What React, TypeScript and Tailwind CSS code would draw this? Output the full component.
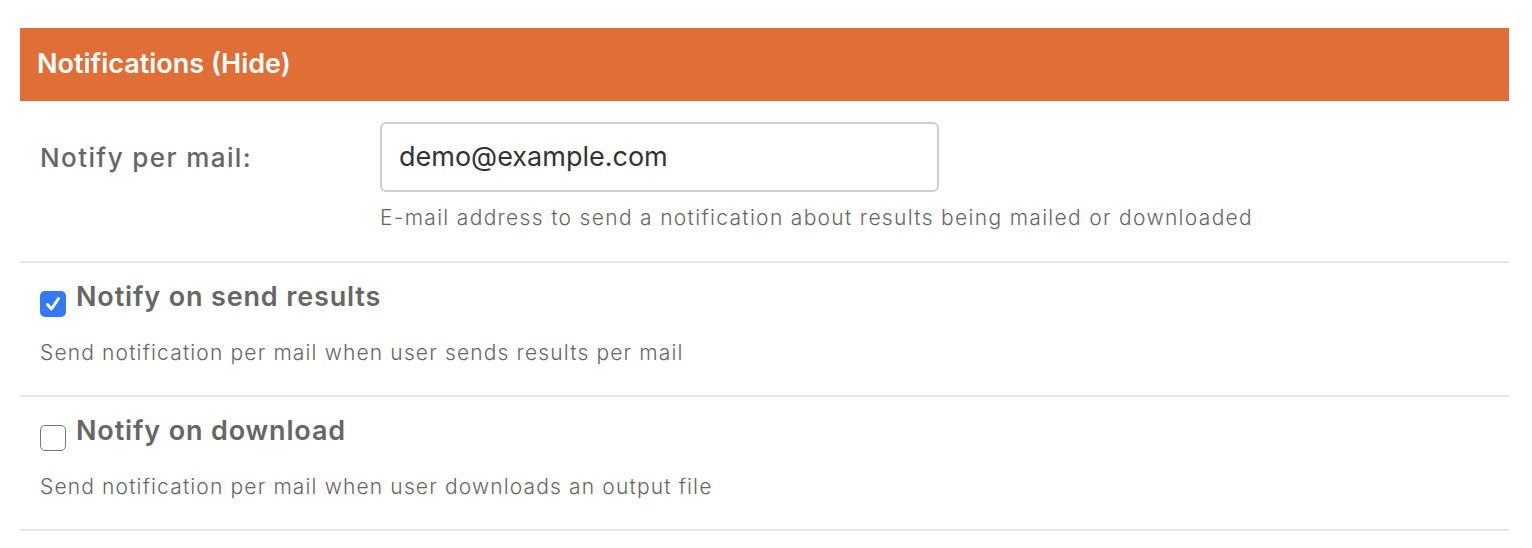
import React from "react";

function Check({ checked }: { checked: boolean }) {
  return checked ? (
    <span className="mt-[9px] flex h-[26px] w-[26px] shrink-0 items-center justify-center rounded-[5px] bg-[#3478f6]">
      <svg width="18" height="18" viewBox="0 0 18 18" fill="none">
        <path d="M3.5 9.5 L7.5 14 L14.5 3.5" stroke="white" strokeWidth="3" strokeLinecap="round" strokeLinejoin="round" />
      </svg>
    </span>
  ) : (
    <span className="mt-[9px] h-[26px] w-[26px] shrink-0 rounded-[5px] border-[1.5px] border-[#767676] bg-white" />
  );
}

function CheckRow({ checked, title, desc }: { checked: boolean; title: string; desc: string }) {
  return (
    <div className="border-b-2 border-[#e6e6e6] px-5 pb-[30px] pt-[19px]">
      <div className="flex items-start gap-[10px]">
        <Check checked={checked} />
        <span className="text-[27px] font-semibold leading-[30px] tracking-[0.85px] text-[#666]">{title}</span>
      </div>
      <div className="mt-[24px] text-[21px] font-light leading-[24px] tracking-[1.15px] text-[#666]">{desc}</div>
    </div>
  );
}

export default function App() {
  return (
    <div className="min-h-[548px] bg-white pl-5 pr-[23px] pt-[28px]" style={{ fontFamily: "Inter, 'Noto Sans', sans-serif" }}>
      <div className="flex h-[73px] items-center bg-[#e06f37] px-[17px]">
        <span className="text-[27px] font-semibold text-white">Notifications (Hide)</span>
      </div>
      <div className="flex border-b-2 border-[#e6e6e6] px-5 pb-[31px] pt-[21px]">
        <div className="flex h-[70px] w-[340px] items-center text-[26px] font-medium tracking-[1.4px] text-[#666]">Notify per mail:</div>
        <div>
          <div className="flex h-[70px] w-[559px] items-center rounded-[6px] border-2 border-[#cfcfcf] px-[17px] text-[27px] text-[#333]">
            demo@example.com
          </div>
          <div className="mt-[14px] whitespace-nowrap text-[21px] font-light leading-[24px] tracking-[1.32px] text-[#666]">
            E-mail address to send a notification about results being mailed or downloaded
          </div>
        </div>
      </div>
      <CheckRow checked title="Notify on send results" desc="Send notification per mail when user sends results per mail" />
      <CheckRow checked={false} title="Notify on download" desc="Send notification per mail when user downloads an output file" />
    </div>
  );
}
